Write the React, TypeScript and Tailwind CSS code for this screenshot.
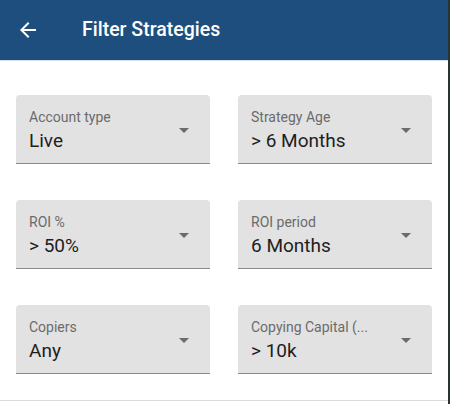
const filters = [
  { label: "Account type", value: "Live" },
  { label: "Strategy Age", value: "> 6 Months" },
  { label: "ROI %", value: "> 50%" },
  { label: "ROI period", value: "6 Months" },
  { label: "Copiers", value: "Any" },
  { label: "Copying Capital (...", value: "> 10k" },
];

function SelectField({ label, value }: { label: string; value: string }) {
  return (
    <div className="relative h-[69px] rounded-t-[4px] bg-[#e2e2e2] border-b border-[#8a8a8a] pl-[13px] pr-10 pt-[14px]">
      <div className="text-[14px] leading-[16px] text-[#6b6b6b] truncate">{label}</div>
      <div className="mt-[5px] text-[19px] leading-[22px] text-[#1e1e1e] truncate">{value}</div>
      <svg
        className="absolute right-[21px] top-[33px]"
        width="10"
        height="5"
        viewBox="0 0 10 5"
      >
        <path d="M0 0h10L5 5z" fill="#6b6b6b" />
      </svg>
    </div>
  );
}

export default function App() {
  return (
    <div className="flex w-[450px] h-[404px] font-['Roboto',sans-serif]">
      <div className="w-[448px] flex flex-col bg-white">
        <header className="h-[60px] shrink-0 bg-[#1d4e7d] flex items-center pl-4">
          <svg width="24" height="24" viewBox="0 0 24 24" fill="#ffffff">
            <path d="M20 11H7.83l5.59-5.59L12 4l-8 8 8 8 1.41-1.41L7.83 13H20v-2z" />
          </svg>
          <h1 className="ml-[42px] text-[19.5px] font-medium text-white">Filter Strategies</h1>
        </header>
        <div className="h-px bg-[#cfe0ea]" />
        <div className="grid grid-cols-2 gap-x-7 gap-y-[36px] px-4 pt-[34px] pb-[26px] border-b border-[#dcdcdc]">
          {filters.map((f) => (
            <SelectField key={f.label} label={f.label} value={f.value} />
          ))}
        </div>
      </div>
      <div className="w-[2px] bg-[#2b3434]" />
    </div>
  );
}
